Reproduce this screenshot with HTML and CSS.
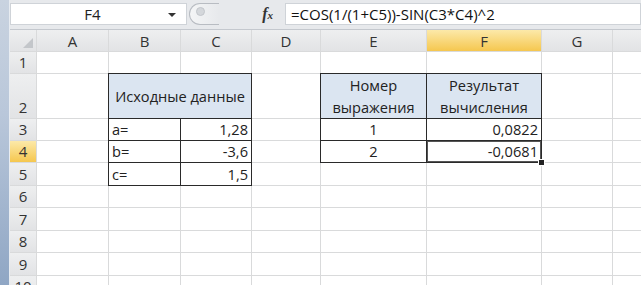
FILE: index.html
```html
<!DOCTYPE html>
<html lang="ru">
<head>
    <meta charset="UTF-8">
    <title>Книга1 - Excel</title>
    <link rel="stylesheet" href="styles.css">
</head>
<body>
    <div class="window">
        <div class="frame"></div>
        <div class="main">
            <div class="formula-bar">
                <div class="name-box">
                    <span class="name">F4</span>
                    <span class="drop"></span>
                </div>
                <div class="fx-zone">
                    <span class="grip"><span class="dot"></span></span>
                    <span class="fx">f<small>x</small></span>
                </div>
                <div class="formula">=COS(1/(1+C5))-SIN(C3*C4)^2</div>
            </div>

            <div class="sheet">
                <!-- header -->
                <div class="corner"><span class="tri"></span></div>
                <div class="col-hdr">A</div>
                <div class="col-hdr">B</div>
                <div class="col-hdr">C</div>
                <div class="col-hdr">D</div>
                <div class="col-hdr">E</div>
                <div class="col-hdr active">F</div>
                <div class="col-hdr">G</div>
                <div class="col-hdr"></div>

                <!-- 1 -->
                <div class="row-hdr">1</div>
                <div class="cell"></div><div class="cell"></div><div class="cell"></div><div class="cell"></div>
                <div class="cell"></div><div class="cell"></div><div class="cell"></div><div class="cell"></div>

                <!-- 2 -->
                <div class="row-hdr">2</div>
                <div class="cell"></div>
                <div class="cell t head wide">Исходные данные</div>
                <div class="cell"></div>
                <div class="cell t head">Номер<br>выражения</div>
                <div class="cell t head">Результат<br>вычисления</div>
                <div class="cell"></div><div class="cell"></div>

                <!-- 3 -->
                <div class="row-hdr">3</div>
                <div class="cell"></div>
                <div class="cell t">a=</div>
                <div class="cell t num">1,28</div>
                <div class="cell"></div>
                <div class="cell t mid">1</div>
                <div class="cell t num">0,0822</div>
                <div class="cell"></div><div class="cell"></div>

                <!-- 4 -->
                <div class="row-hdr active">4</div>
                <div class="cell"></div>
                <div class="cell t">b=</div>
                <div class="cell t num">-3,6</div>
                <div class="cell"></div>
                <div class="cell t mid">2</div>
                <div class="cell t num sel">-0,0681</div>
                <div class="cell"></div><div class="cell"></div>

                <!-- 5 -->
                <div class="row-hdr">5</div>
                <div class="cell"></div>
                <div class="cell t">c=</div>
                <div class="cell t num">1,5</div>
                <div class="cell"></div><div class="cell"></div><div class="cell"></div><div class="cell"></div><div class="cell"></div>

                <!-- 6 - 10 -->
                <div class="row-hdr">6</div>
                <div class="cell"></div><div class="cell"></div><div class="cell"></div><div class="cell"></div>
                <div class="cell"></div><div class="cell"></div><div class="cell"></div><div class="cell"></div>

                <div class="row-hdr">7</div>
                <div class="cell"></div><div class="cell"></div><div class="cell"></div><div class="cell"></div>
                <div class="cell"></div><div class="cell"></div><div class="cell"></div><div class="cell"></div>

                <div class="row-hdr">8</div>
                <div class="cell"></div><div class="cell"></div><div class="cell"></div><div class="cell"></div>
                <div class="cell"></div><div class="cell"></div><div class="cell"></div><div class="cell"></div>

                <div class="row-hdr">9</div>
                <div class="cell"></div><div class="cell"></div><div class="cell"></div><div class="cell"></div>
                <div class="cell"></div><div class="cell"></div><div class="cell"></div><div class="cell"></div>

                <div class="row-hdr last">10</div>
                <div class="cell"></div><div class="cell"></div><div class="cell"></div><div class="cell"></div>
                <div class="cell"></div><div class="cell"></div><div class="cell"></div><div class="cell"></div>
            </div>
        </div>
    </div>
</body>
</html>
```

FILE: styles.css
```css
body {
    margin: 0;
    background-color: #fff;
    font-family: "Open Sans", "Noto Sans", sans-serif;
    color: #222;
}

.window {
    display: flex;
    width: 641px;
    height: 285px;
    overflow: hidden;
}

/* left window frame */
.frame {
    width: 10px;
    flex-shrink: 0;
    background: linear-gradient(to bottom, #c9d3e0 0%, #b9c7da 40%, #8fa6c4 100%);
    border-right: 1px solid #e8ecf1;
    box-sizing: border-box;
}

.main {
    flex: 1;
    display: flex;
    flex-direction: column;
    min-width: 0;
}

/* formula bar */
.formula-bar {
    height: 31px;
    display: flex;
    padding: 3px 0 4px;
    box-sizing: border-box;
    background-color: #e7e9ec;
    border-bottom: 1px solid #c4c8ce;
}

.name-box {
    width: 177px;
    display: flex;
    align-items: center;
    background-color: #fff;
    border: 1px solid #cfd3d8;
    box-sizing: border-box;
}

.name {
    flex: 1;
    text-align: center;
    font-size: 15px;
    padding-left: 6px;
}

.drop {
    width: 0;
    height: 0;
    margin: 2px 10px 0 0;
    border-left: 4px solid transparent;
    border-right: 4px solid transparent;
    border-top: 4px solid #333;
}

.fx-zone {
    width: 98px;
    display: flex;
    align-items: center;
    justify-content: space-between;
    padding: 0 12px 0 2px;
    box-sizing: border-box;
}

.grip {
    width: 30px;
    height: 22px;
    border: 1px solid #b8bcc2;
    border-right: none;
    border-radius: 12px 0 0 12px;
    background: linear-gradient(to right, #f4f5f6, #e7e9ec);
    display: flex;
    align-items: center;
    padding-left: 6px;
    box-sizing: border-box;
}

.dot {
    width: 7px;
    height: 7px;
    border-radius: 50%;
    background-color: #d4d7db;
    border: 1px solid #c2c6cb;
    margin-top: -6px;
}

.fx {
    font-family: "Liberation Serif", serif;
    font-style: italic;
    font-weight: bold;
    font-size: 16px;
    color: #333;
}

.fx small {
    font-size: 11px;
}

.formula {
    flex: 1;
    display: flex;
    align-items: center;
    padding-left: 5px;
    background-color: #fff;
    border: 1px solid #cfd3d8;
    font-size: 15px;
    color: #111;
}

/* sheet grid */
.sheet {
    flex: 1;
    display: grid;
    grid-template-columns: 26px 71px 71px 70px 68px 105px 114px 70px 1fr;
    grid-template-rows: 21px 21px 44px 21px 21px 22px 21px 22px 21px 22px 30px;
    gap: 1px;
    background-color: #d9dadb;
    font-size: 14.6px;
}

.corner,
.col-hdr,
.row-hdr {
    display: flex;
    align-items: center;
    justify-content: center;
    background: linear-gradient(to bottom, #eeeff0, #e2e3e5);
    color: #333;
    font-size: 15px;
}

.corner {
    position: relative;
}

.tri {
    position: absolute;
    right: 3px;
    bottom: 3px;
    width: 0;
    height: 0;
    border-left: 10px solid transparent;
    border-bottom: 10px solid #c3c6ca;
}

.row-hdr {
    align-items: flex-end;
    padding-bottom: 1px;
}

.row-hdr.last {
    align-items: flex-start;
    padding-bottom: 0;
    overflow: hidden;
}

.col-hdr.active,
.row-hdr.active {
    background: linear-gradient(to bottom, #fce9a9, #f5c74f);
    color: #333;
}

.cell {
    display: flex;
    align-items: flex-end;
    padding: 0 3px 1px;
    background-color: #fff;
    white-space: nowrap;
    min-width: 0;
}

/* table borders */
.t {
    box-shadow: 0 0 0 1px #2a2a2a;
}

.head {
    align-items: center;
    justify-content: center;
    text-align: center;
    background-color: #dbe5f1;
    line-height: 22px;
    padding-bottom: 0;
}

.wide {
    grid-column: span 2;
}

.num {
    justify-content: flex-end;
}

.mid {
    justify-content: center;
}

.sel {
    position: relative;
    box-shadow: 0 0 0 1px #2a2a2a, inset 0 0 0 1px #555;
}

.sel::after {
    content: "";
    position: absolute;
    right: -4px;
    bottom: -4px;
    width: 5px;
    height: 5px;
    background-color: #222;
    border: 1px solid #fff;
}
```
